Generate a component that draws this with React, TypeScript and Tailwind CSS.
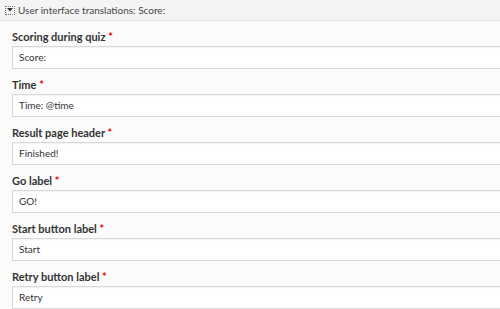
const fields = [
  { label: "Scoring during quiz", value: "Score:" },
  { label: "Time", value: "Time: @time" },
  { label: "Result page header", value: "Finished!" },
  { label: "Go label", value: "GO!" },
  { label: "Start button label", value: "Start" },
  { label: "Retry button label", value: "Retry" },
];

const Field = ({ label, value }: { label: string; value: string }) => {
  return (
    <div className="flex flex-col">
      <label className="text-[11px] font-bold text-[#333] leading-[14px] h-[18px] pt-[2px]">
        {label} <span className="text-[#e00]">*</span>
      </label>
      <div className="h-[23px] border border-[#d9d9d9] bg-white pl-[6px] text-[10px] text-[#333] flex items-center w-[500px] shadow-[inset_0_1px_1px_rgba(0,0,0,0.05)]">
        {value}
      </div>
    </div>
  );
};

export default function App() {
  return (
    <div className="w-[500px] h-[309px] overflow-hidden bg-[#fbfbfb] font-['Lato','Open_Sans',sans-serif]">
      <div className="h-[21px] bg-[#f4f4f4] border-b border-[#e2e2e2] flex items-center pl-[5px] gap-[3px]">
        <div className="w-[10px] h-[9px] border border-dotted border-[#777] flex items-center justify-center">
          <svg width="6" height="4" viewBox="0 0 6 4">
            <path d="M0 0 L6 0 L3 3.5 Z" fill="#333" />
          </svg>
        </div>
        <span className="text-[10px] text-[#444]">User interface translations: Score:</span>
      </div>
      <div className="pl-[12px] pt-[7px] flex flex-col gap-[7px]">
        {fields.map((f) => (
          <Field key={f.label} {...f} />
        ))}
      </div>
    </div>
  );
}
